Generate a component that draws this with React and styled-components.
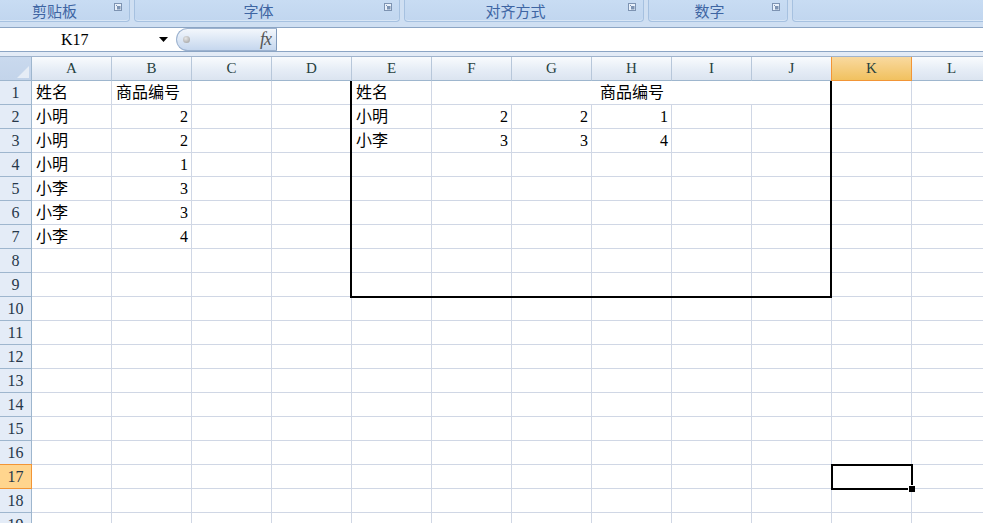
import React from "react";
import styled, { createGlobalStyle } from "styled-components";

const GlobalStyle = createGlobalStyle`
  html, body { margin: 0; padding: 0; background: #ffffff; overflow: hidden; }
  #root { width: 983px; height: 523px; overflow: hidden; }
`;

const Page = styled.div`
  width: 983px;
  height: 523px;
  overflow: hidden;
  display: flex;
  flex-direction: column;
  font-family: "Liberation Serif", "Noto Sans CJK SC", serif;
`;

const Ribbon = styled.div`
  height: 27px;
  box-sizing: border-box;
  padding-bottom: 5px;
  margin-left: -4px;
  background: #cfdff2;
  display: flex;
  gap: 4px;
  flex-shrink: 0;
`;

const Group = styled.div`
  flex: 0 0 ${(p) => p.$w}px;
  box-sizing: border-box;
  height: 22px;
  display: grid;
  align-items: center;
  background: linear-gradient(#c8dcf3, #c1d6ef);
  border: 1px solid #a6c1e0;
  border-top: none;
  border-radius: 0 0 4px 4px;
  box-shadow: inset 0 -1px 0 #d8e6f6;
`;

const GroupLabel = styled.span`
  grid-area: 1 / 1;
  text-align: center;
  padding-right: 17px;
  font-family: "Noto Sans CJK SC", sans-serif;
  font-size: 15px;
  line-height: 21px;
  color: #3e65a3;
`;

const Launcher = styled.svg`
  grid-area: 1 / 1;
  justify-self: end;
  align-self: start;
  margin: 3px 7px 0 0;
`;

const FormulaBar = styled.div`
  height: 25px;
  box-sizing: border-box;
  border-top: 1px solid #8ca5c4;
  border-bottom: 1px solid #8ca5c4;
  background: #ffffff;
  display: flex;
  flex-shrink: 0;
`;

const NameBox = styled.div`
  flex: 0 0 176px;
  display: flex;
  align-items: center;
  box-sizing: border-box;
  padding: 0 8px 0 61px;
  font-size: 16px;
  color: #000;
`;

const NameText = styled.span`
  flex: 1;
`;

const FxButton = styled.div`
  flex: 0 0 101px;
  box-sizing: border-box;
  height: 23px;
  border: 1px solid #9cb2cf;
  border-right-color: #7f99bb;
  border-radius: 12px 0 0 12px;
  background: linear-gradient(#f3f7fc, #dce7f5 50%, #c6d7ee);
  display: flex;
  align-items: center;
  justify-content: space-between;
  padding: 0 5px 0 6px;
`;

const Dot = styled.span`
  width: 7px;
  height: 7px;
  border-radius: 50%;
  background: radial-gradient(circle at 40% 35%, #e6e6e6, #9a9a9a);
`;

const Fx = styled.span`
  font-family: "Liberation Serif", serif;
  font-style: italic;
  font-size: 18px;
  color: #555;
  letter-spacing: -1px;
`;

const FormulaInput = styled.div`
  flex: 1;
`;

const Strip = styled.div`
  height: 5px;
  box-sizing: border-box;
  background: #e3ebf6;
  border-bottom: 1px solid #9fb3cc;
  flex-shrink: 0;
`;

const Sheet = styled.div`
  display: grid;
  flex: 1;
  overflow: hidden;
`;

const Layer = styled.div`
  grid-area: 1 / 1;
  display: grid;
  grid-template-columns: 32px repeat(12, 80px);
  grid-auto-rows: 24px;
  align-self: start;
  pointer-events: ${(p) => (p.$overlay ? "none" : "auto")};
`;

const Corner = styled.div`
  box-sizing: border-box;
  border-right: 1px solid #9eb6ce;
  border-bottom: 1px solid #9eb6ce;
  background: linear-gradient(#c9d9ee, #c3d4ea);
  display: flex;
  align-items: flex-end;
  justify-content: flex-end;
  padding: 0 2px 2px 0;
`;

const ColHeader = styled.div`
  box-sizing: border-box;
  border-right: 1px solid ${(p) => (p.$sel ? "#f29536" : "#b7c7da")};
  border-bottom: 1px solid ${(p) => (p.$sel ? "#f29536" : "#9eb6ce")};
  border-left: ${(p) => (p.$sel ? "1px solid #f29536" : "none")};
  margin-left: ${(p) => (p.$sel ? "-1px" : "0")};
  background: ${(p) =>
    p.$sel
      ? "linear-gradient(#f9d99f, #f1c15f)"
      : "linear-gradient(#f9fbfd, #e6edf6 55%, #dbe4f0)"};
  display: flex;
  align-items: center;
  justify-content: center;
  font-size: 15px;
  color: #27413e;
`;

const RowHeader = styled.div`
  box-sizing: border-box;
  border-right: 1px solid ${(p) => (p.$sel ? "#f29536" : "#9eb6ce")};
  border-bottom: 1px solid ${(p) => (p.$sel ? "#f29536" : "#9eb6ce")};
  border-top: ${(p) => (p.$sel ? "1px solid #f29536" : "none")};
  margin-top: ${(p) => (p.$sel ? "-1px" : "0")};
  background: ${(p) => (p.$sel ? "#ffd58e" : "#e4ecf7")};
  display: flex;
  align-items: center;
  justify-content: center;
  font-size: 16px;
  color: #27384a;
`;

const Cell = styled.div`
  box-sizing: border-box;
  border-right: 1px solid #d0d7e5;
  border-bottom: 1px solid #d0d7e5;
  grid-column: span ${(p) => p.$span || 1};
  display: flex;
  align-items: flex-end;
  justify-content: ${(p) =>
    p.$align === "right" ? "flex-end" : p.$align === "center" ? "center" : "flex-start"};
  padding: 0 3px 1px 4px;
  font-size: 16px;
  line-height: 20px;
  color: #000;
  white-space: nowrap;
  overflow: visible;
`;

const RangeBox = styled.div`
  grid-column: 6 / 12;
  grid-row: 2 / 11;
  margin: 0 0 -1px -2px;
  border-left: 2px solid #000;
  border-right: 2px solid #000;
  border-bottom: 2px solid #000;
`;

const Selection = styled.div`
  grid-column: 12 / 13;
  grid-row: 18 / 19;
  margin: -1px;
  border: 2px solid #000;
  display: grid;
`;

const FillHandle = styled.span`
  justify-self: end;
  align-self: end;
  width: 6px;
  height: 6px;
  margin: 0 -4px -4px 0;
  background: #000;
  border-left: 1px solid #fff;
  border-top: 1px solid #fff;
`;

const COLS = ["A", "B", "C", "D", "E", "F", "G", "H", "I", "J", "K", "L"];
const ROWS = Array.from({ length: 19 }, (_, i) => i + 1);

const DATA = {
  A1: "姓名",
  B1: "商品编号",
  A2: "小明",
  A3: "小明",
  A4: "小明",
  A5: "小李",
  A6: "小李",
  A7: "小李",
  B2: 2,
  B3: 2,
  B4: 1,
  B5: 3,
  B6: 3,
  B7: 4,
  E1: "姓名",
  E2: "小明",
  E3: "小李",
  F2: 2,
  G2: 2,
  H2: 1,
  F3: 3,
  G3: 3,
  H3: 4,
};

const MERGES = { F1: { span: 5, align: "center", value: "商品编号" } };
const SKIP = new Set(["G1", "H1", "I1", "J1"]);

const LauncherIcon = () => (
  <Launcher width="8" height="8" viewBox="0 0 8 8">
    <rect x="0.5" y="0.5" width="7" height="7" fill="#e8f0fa" stroke="#7d93b2" />
    <rect x="3" y="3" width="3.5" height="3.5" fill="#7d93b2" />
    <path d="M2 2 L4 4" stroke="#7d93b2" strokeWidth="1" />
  </Launcher>
);

const GROUPS = [
  { label: "剪贴板", w: 134 },
  { label: "字体", w: 266 },
  { label: "对齐方式", w: 240 },
  { label: "数字", w: 140 },
  { label: "", w: 200, noIcon: true },
];

export default function App() {
  const cells = [];
  cells.push(
    <Corner key="corner">
      <svg width="12" height="12" viewBox="0 0 12 12">
        <polygon points="12,0 12,12 0,12" fill="#e6edf6" />
      </svg>
    </Corner>
  );
  COLS.forEach((c) =>
    cells.push(
      <ColHeader key={"h" + c} $sel={c === "K"}>
        {c}
      </ColHeader>
    )
  );
  ROWS.forEach((r) => {
    cells.push(
      <RowHeader key={"r" + r} $sel={r === 17}>
        {r}
      </RowHeader>
    );
    COLS.forEach((c) => {
      const id = c + r;
      if (SKIP.has(id)) return;
      const m = MERGES[id];
      if (m) {
        cells.push(
          <Cell key={id} $span={m.span} $align={m.align}>
            {m.value}
          </Cell>
        );
        return;
      }
      const v = DATA[id];
      const isNum = typeof v === "number";
      cells.push(
        <Cell key={id} $align={isNum ? "right" : "left"}>
          {v !== undefined ? v : ""}
        </Cell>
      );
    });
  });

  return (
    <Page>
      <GlobalStyle />
      <Ribbon>
        {GROUPS.map((g, i) => (
          <Group key={i} $w={g.w}>
            <GroupLabel>{g.label}</GroupLabel>
            {!g.noIcon && <LauncherIcon />}
          </Group>
        ))}
      </Ribbon>
      <FormulaBar>
        <NameBox>
          <NameText>K17</NameText>
          <svg width="9" height="5" viewBox="0 0 9 5">
            <polygon points="0,0 9,0 4.5,5" fill="#000" />
          </svg>
        </NameBox>
        <FxButton>
          <Dot />
          <Fx>fx</Fx>
        </FxButton>
        <FormulaInput />
      </FormulaBar>
      <Strip />
      <Sheet>
        <Layer>{cells}</Layer>
        <Layer $overlay>
          <RangeBox />
          <Selection>
            <FillHandle />
          </Selection>
        </Layer>
      </Sheet>
    </Page>
  );
}
